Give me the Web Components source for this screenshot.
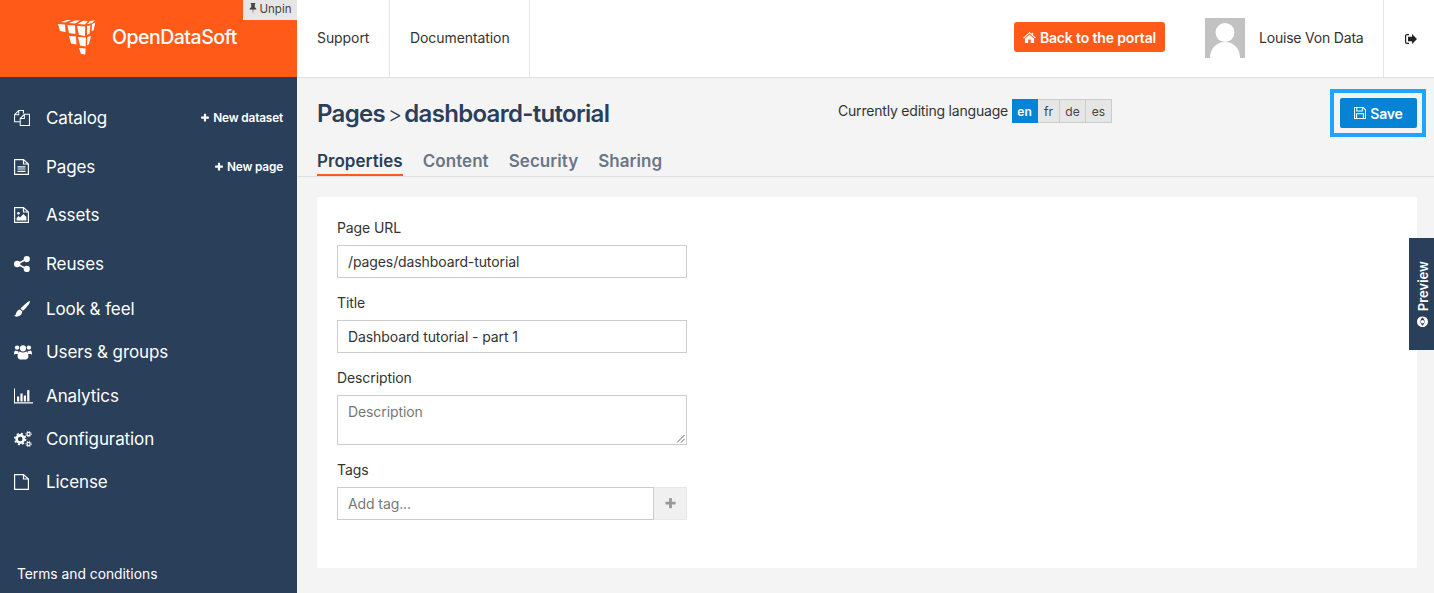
<!DOCTYPE html>
<html lang="en">
<head>
<meta charset="utf-8">
<title>Pages - dashboard-tutorial</title>
<style>
  html, body { margin: 0; height: 100%; }
  body { font-family: Inter, "Liberation Sans", sans-serif; color: #333; overflow: hidden; }
</style>
</head>
<body>
<app-shell>
  <side-bar slot="side">
    <nav-item h="48" icon="catalog" label="Catalog" action="New dataset"></nav-item>
    <nav-item h="49" icon="file-text" label="Pages" action="New page"></nav-item>
    <nav-item h="48" icon="file-image" label="Assets"></nav-item>
    <nav-item h="49" icon="share" label="Reuses"></nav-item>
    <nav-item h="42" icon="brush" label="Look &amp; feel"></nav-item>
    <nav-item h="44" icon="users" label="Users &amp; groups"></nav-item>
    <nav-item h="44" icon="chart" label="Analytics"></nav-item>
    <nav-item h="42" icon="cogs" label="Configuration"></nav-item>
    <nav-item h="44" icon="file" label="License"></nav-item>
  </side-bar>
  <top-bar slot="top"></top-bar>
  <page-head slot="main"></page-head>
  <form-card slot="main">
    <form-field label="Page URL" value="/pages/dashboard-tutorial"></form-field>
    <form-field label="Title" value="Dashboard tutorial - part 1"></form-field>
    <form-field label="Description" placeholder="Description" kind="area"></form-field>
    <form-field label="Tags" placeholder="Add tag..." kind="tag"></form-field>
  </form-card>
  <preview-tab slot="main"></preview-tab>
</app-shell>

<script>
// icons, drawn on the sizes they have in the reference
const ICONS = {
  plus: '<svg viewBox="0 0 1792 1792" fill="currentColor"><path d="M1600 736v192q0 40-28 68t-68 28h-416v416q0 40-28 68t-68 28h-192q-40 0-68-28t-28-68v-416h-416q-40 0-68-28t-28-68v-192q0-40 28-68t68-28h416v-416q0-40 28-68t68-28h192q40 0 68 28t28 68v416h416q40 0 68 28t28 68z"/></svg>',
  catalog: '<svg viewBox="0 0 17 17" fill="none" stroke="currentColor" stroke-width="1.1"><path d="M10 3.8 V.6 H5 L.6 5 V12.4 H6.2 M5 .6 V5 H.6"/><path d="M11 4.6 H16.4 V16.4 H6.6 V9 Z M11 4.6 V9 H6.6"/></svg>',
  'file-text': '<svg viewBox="0 0 15 16" fill="none" stroke="currentColor" stroke-width="1.2"><path d="M.6.6 H9.5 L14.4 5 V15.4 H.6 Z M9.5.6 V5 H14.4"/><path d="M3.5 7.8 H11.5 M3.5 10 H11.5 M3.5 12.3 H11.5"/></svg>',
  'file-image': '<svg viewBox="0 0 15 16" fill="none" stroke="currentColor" stroke-width="1.2"><path d="M.6.6 H9.5 L14.4 5 V15.4 H.6 Z M9.5.6 V5 H14.4"/><circle cx="4.4" cy="6.2" r="1.3" fill="currentColor" stroke="none"/><path d="M2.6 13.4 V11 L4.6 9 L6 10.4 L9.4 7 L12.4 10 V13.4 Z" fill="currentColor" stroke="none"/></svg>',
  share: '<svg viewBox="0 0 15 15" fill="currentColor"><circle cx="3" cy="7.5" r="3"/><circle cx="12" cy="2.9" r="2.9"/><circle cx="12" cy="12.1" r="2.9"/><path d="M3 7.5 L12 2.9 M3 7.5 L12 12.1" stroke="currentColor" stroke-width="1.6"/></svg>',
  brush: '<svg viewBox="0 0 17 17" fill="currentColor"><path d="M16.7.2 C17.2.6 16.6 2.4 15 4.6 C13.4 6.8 11 9.4 9.5 10.4 L6.9 8.2 C8.4 6.2 10.8 3.9 13 2.3 C14.8 1 16.2-.2 16.7.2 Z"/><path d="M6.2 8.9 L8.8 11.2 C8.6 14 6.4 16.4 3.4 16.6 C2 16.7.6 16.3 0 15.8 C1.3 15.4 1.9 14.8 2.2 13.4 C2.6 11.2 4 9.2 6.2 8.9 Z"/></svg>',
  users: '<svg viewBox="0 0 18 16" fill="currentColor"><circle cx="3.1" cy="3.6" r="2.2"/><circle cx="14.9" cy="3.6" r="2.2"/><circle cx="9" cy="4.3" r="3.1"/><path d="M0 10.4 C0 7.6.8 6.6 1.8 6.6 C2.6 7.3 3.6 7.5 4.6 7.2 C4.2 8 4 9 4.1 10 H1.2 C.8 10.6.2 10.6 0 10.4 Z"/><path d="M18 10.4 C18 7.6 17.2 6.6 16.2 6.6 C15.4 7.3 14.4 7.5 13.4 7.2 C13.8 8 14 9 13.9 10 H16.8 C17.2 10.6 17.8 10.6 18 10.4 Z"/><path d="M5.7 7.6 C7.5 8.9 10.5 8.9 12.3 7.6 C13.6 8 14.4 9.6 14.4 12.6 C14.4 14.4 13.4 15.4 12 15.4 H6 C4.6 15.4 3.6 14.4 3.6 12.6 C3.6 9.6 4.4 8 5.7 7.6 Z"/></svg>',
  chart: '<svg viewBox="0 0 19 15" fill="currentColor"><path d="M0 0 H1 V13.8 H19 V15 H0 Z"/><rect x="3" y="8" width="2.2" height="5"/><rect x="6.4" y="5" width="2.2" height="8"/><rect x="9.8" y="7" width="2.2" height="6"/><rect x="13.2" y="1.6" width="2.2" height="11.4"/></svg>',
  cogs: '<svg viewBox="0 0 18 16" fill="none" stroke="currentColor"><circle cx="6.2" cy="8" r="3.6" stroke-width="2.6"/><circle cx="6.2" cy="8" r="5.4" stroke-width="1.6" stroke-dasharray="2.1 2.14"/><circle cx="14.6" cy="3" r="1.6" stroke-width="1.2"/><circle cx="14.6" cy="3" r="2.7" stroke-width=".9" stroke-dasharray="1.1 1.02"/><circle cx="14.6" cy="13" r="1.6" stroke-width="1.2"/><circle cx="14.6" cy="13" r="2.7" stroke-width=".9" stroke-dasharray="1.1 1.02"/></svg>',
  file: '<svg viewBox="0 0 15 16" fill="none" stroke="currentColor" stroke-width="1.2"><path d="M.6.6 H9.5 L14.4 5 V15.4 H.6 Z M9.5.6 V5 H14.4"/></svg>',
  pin: '<svg viewBox="0 0 9 13" fill="currentColor"><path d="M1.6 0 H7.4 V1 H6.6 V5 C7.8 5.6 8.6 6.6 8.6 7.8 H5 L4.5 13 L4 7.8 H.4 C.4 6.6 1.2 5.6 2.4 5 V1 H1.6 Z"/></svg>',
  home: '<svg viewBox="0 0 14 12" fill="currentColor"><path d="M7 0 L9.3 2 V.8 H11 V3.5 L14 6.2 L13.2 7 L7 1.7 L.8 7 L0 6.2 Z"/><path d="M7 2.9 L12 7.1 V12 H8.4 V8.3 H5.6 V12 H2 V7.1 Z"/></svg>',
  signout: '<svg viewBox="0 0 12 10" fill="currentColor"><path d="M4 0 H2 C.8 0 0 .8 0 2 V8 C0 9.2.8 10 2 10 H4 V8.8 H2.2 C1.6 8.8 1.2 8.4 1.2 7.8 V2.2 C1.2 1.6 1.6 1.2 2.2 1.2 H4 Z"/><path d="M7 0 L12 5 L7 10 V7.2 H3 V2.8 H7 Z"/></svg>',
  save: '<svg viewBox="0 0 13 13" fill="none" stroke="currentColor" stroke-width="1.1"><path d="M.6.6 H10 L12.4 3 V12.4 H.6 Z"/><path d="M3 .8 V4.4 H9 V.8 M2.8 12.2 V7.4 H10.2 V12.2"/></svg>',
  eye: '<svg viewBox="0 0 12 12" fill="currentColor"><circle cx="6" cy="6" r="6"/><path d="M1.6 6 C3.4 3 8.6 3 10.4 6 C8.6 9 3.4 9 1.6 6 Z" fill="#2a3f5a"/><circle cx="6" cy="6" r="1.9"/></svg>'
};

function define(name, css, render) {
  customElements.define(name, class extends HTMLElement {
    connectedCallback() {
      if (this.shadowRoot) return;
      this.attachShadow({ mode: 'open' });
      this.shadowRoot.innerHTML = `<style>${css}</style>${render(this)}`;
    }
  });
}

define('app-shell', `
  :host { display: grid; grid-template-columns: 297px 1fr; grid-template-rows: 78px 1fr; height: 593px; background: #f4f4f4; overflow: hidden; position: relative; }
  .side { grid-row: 1 / 3; display: flex; min-height: 0; }
  .main { position: relative; min-width: 0; }
`, () => `
  <div class="side"><slot name="side"></slot></div>
  <slot name="top"></slot>
  <div class="main"><slot name="main"></slot></div>
`);

define('side-bar', `
  :host { display: flex; flex-direction: column; width: 297px; background: #2a3f5a; color: #fff; }
  .brand { position: relative; height: 77px; background: #ff5a17; display: flex; align-items: flex-start; flex: none; }
  .logo { width: 44px; height: 38px; margin: 18px 0 0 56px; flex: none; }
  .name { font-size: 19.5px; font-weight: 500; letter-spacing: -.5px; margin: 25px 0 0 12px; line-height: 24px; color: #fff; }
  .unpin { position: absolute; top: 0; right: 0; width: 54px; height: 20px; padding-bottom: 3px; background: #e6e6e6; color: #444; font-size: 11.5px; display: flex; align-items: center; justify-content: center; gap: 3px; box-sizing: border-box; }
  .unpin svg { width: 8px; height: 11px; }
  nav { padding-top: 17px; display: flex; flex-direction: column; }
  .terms { margin-top: auto; padding: 0 0 10px 17px; font-size: 13.8px; line-height: 18px; }
`, () => `
  <div class="brand">
    <svg class="logo" viewBox="56 18 44 38" fill="#fff">
      <path d="M61 22 L67 20 L71 20 L65 22.6 Z M69 23 L75 20.4 L80 20.6 L75 23.6 Z M77.5 24 L83 20.8 L88 21 L85 24.4 Z M87 24.2 L90 21 L95 20.2 L92 23 Z"/>
      <path d="M58 24 L65 24.6 L65.6 32 L60 31 Z M67.4 25 L75 25.6 L75.4 34 L69 33 Z M77 26 L85.2 26.4 L85 36 L79 35 Z M87 26 L90.4 25.4 L89.6 33.6 L87 35 Z M92 24 L95.4 22.6 L93.6 30 L91.6 31.6 Z"/>
      <path d="M69 36 L76 36.6 L76.4 44.4 L71 43.6 Z M78 37 L86 37.4 L85.6 46.4 L80 45.6 Z M87.4 37 L91 36 L89 44 L87 45.6 Z"/>
      <path d="M79 48 L85.6 48.4 L85.2 54.6 L81 54 Z"/>
    </svg>
    <span class="name">OpenDataSoft</span>
    <div class="unpin">${ICONS.pin}<span>Unpin</span></div>
  </div>
  <nav><slot></slot></nav>
  <div class="terms">Terms and conditions</div>
`);

define('nav-item', `
  :host { display: flex; align-items: center; padding: 0 14px; font-size: 17px; color: #fff; }
  .icon { width: 19px; height: 16px; display: flex; align-items: center; flex: none; }
  .icon svg { height: 100%; width: auto; display: block; }
  .label { margin-left: 13px; letter-spacing: -.1px; }
  .action { margin-left: auto; font-size: 11.8px; font-weight: 600; letter-spacing: -.15px; display: flex; align-items: center; gap: 3px; }
  .action svg { width: 10px; height: 10px; }
`, el => `
  <style>:host { height: ${el.getAttribute('h')}px; }</style>
  <span class="icon">${ICONS[el.getAttribute('icon')]}</span>
  <span class="label">${el.getAttribute('label').replace('&', '&amp;')}</span>
  ${el.hasAttribute('action') ? `<span class="action">${ICONS.plus}<span>${el.getAttribute('action')}</span></span>` : ''}
`);

define('top-bar', `
  :host { display: flex; align-items: stretch; background: #fff; border-bottom: 1px solid #e0e0e0; box-sizing: border-box; height: 78px; font-size: 14px; color: #333; }
  .link { display: flex; align-items: center; padding: 0 0 2px 20px; box-sizing: border-box; border-right: 1px solid #e6e6e6; letter-spacing: -.08px; }
  .link.a { width: 93px; }
  .link.b { width: 140px; }
  .back { margin: 22px 0 0 auto; height: 30px; width: 151px; box-sizing: border-box; border-radius: 3px; background: #ff5a17; color: #fff; font-weight: 600; font-size: 14px; letter-spacing: -.15px; display: flex; align-items: center; justify-content: center; gap: 4px; }
  .back svg { width: 13px; height: 11px; }
  .user { display: flex; align-items: center; margin-left: 40px; width: 179px; box-sizing: border-box; border-right: 1px solid #e6e6e6; letter-spacing: -.2px; padding-bottom: 2px; }
  .avatar { width: 40px; height: 40px; margin: 0 14px 0 0; flex: none; display: block; }
  .out { width: 50px; flex: none; display: flex; align-items: center; justify-content: center; padding-left: 3px; box-sizing: border-box; }
  .out svg { width: 12px; height: 10px; color: #222; }
`, () => `
  <div class="link a">Support</div>
  <div class="link b">Documentation</div>
  <div class="back">${ICONS.home}<span>Back to the portal</span></div>
  <div class="user">
    <svg class="avatar" viewBox="0 0 40 40"><rect width="40" height="40" fill="#c2c2c2"/><circle cx="20" cy="14.5" r="9.5" fill="#fff"/><path d="M5 40 C5 30 12 24 20 24 C28 24 35 30 35 40 Z" fill="#fff"/></svg>
    <span>Louise Von Data</span>
  </div>
  <div class="out">${ICONS.signout}</div>
`);

define('page-head', `
  :host { display: block; height: 99px; border-bottom: 1px solid #e0e0e0; box-sizing: border-box; padding: 11px 8px 0 20px; }
  .row { display: grid; grid-template-columns: 521px auto 1fr auto; align-items: start; height: 58px; }
  h1 { margin: 10px 0 0; font-size: 24px; line-height: 30px; font-weight: 600; letter-spacing: -.7px; color: #2a3f5a; white-space: nowrap; word-spacing: -2.5px; }
  h1 i { font-style: normal; font-weight: 300; font-size: 22px; }
  .lang { display: flex; align-items: center; margin-top: 10px; font-size: 14px; letter-spacing: -.2px; }
  .lang span { margin-right: 4px; position: relative; top: -1px; }
  .save { grid-column: 4; }
  .tabs { display: flex; gap: 20px; margin-top: 1px; font-size: 17px; font-weight: 600; color: #6a7686; letter-spacing: .05px; }
  .tabs div { height: 28px; line-height: 26px; box-sizing: border-box; }
  .tabs .on { color: #2a3f5a; border-bottom: 2px solid #ff5a17; }
  .outline { border: 4px solid #1fa5ff; padding: 5px 5px 5px 6px; display: inline-flex; }
  .btn { width: 77px; height: 30px; background: #0584d6; color: #fff; border-radius: 2px; font-size: 14px; font-weight: 600; letter-spacing: -.2px; display: flex; align-items: center; justify-content: center; gap: 4px; }
  .btn svg { width: 12px; height: 12px; }
  lang-pick { display: inline-flex; }
`, () => `
  <div class="row">
    <h1>Pages <i>&gt;</i> dashboard-tutorial</h1>
    <div class="lang"><span>Currently editing language</span><lang-pick></lang-pick></div>
    <div class="save"><div class="outline"><div class="btn">${ICONS.save}<span>Save</span></div></div></div>
  </div>
  <div class="tabs"><div class="on">Properties</div><div>Content</div><div>Security</div><div>Sharing</div></div>
`);

define('lang-pick', `
  :host { display: inline-flex; font-size: 12px; letter-spacing: 0; }
  div { height: 24px; box-sizing: border-box; display: flex; align-items: center; justify-content: center; background: #e6e6e6; border: 1px solid #ccc; border-left: 0; color: #444; }
  .on { background: #0584d6; border-color: #0584d6; color: #fff; font-weight: 600; }
`, () => `
  <div class="on" style="width:26px">en</div><div style="width:22px">fr</div><div style="width:26px">de</div><div style="width:26px">es</div>
`);

define('form-card', `
  :host { display: block; margin: 20px 17px 0 20px; height: 371px; box-sizing: border-box; background: #fff; border-radius: 2px; padding: 21px 20px 0; }
`, () => `<slot></slot>`);

define('form-field', `
  :host { display: block; width: 350px; margin-bottom: 15px; font-size: 14px; letter-spacing: -.1px; }
  .lab { height: 20px; line-height: 20px; margin-bottom: 7px; color: #333; }
  .input { position: relative; height: 33px; box-sizing: border-box; border: 1px solid #ccc; background: #fff; padding: 0 10px; display: flex; align-items: center; color: #333; flex: 1; }
  .ph { color: #777; }
  .area { height: 50px; align-items: flex-start; padding-top: 7px; line-height: 17px; }
  .grip { position: absolute; right: 1px; bottom: 1px; width: 9px; height: 9px; }
  .tag { display: flex; }
  .add { width: 33px; height: 33px; flex: none; box-sizing: border-box; background: #f0f0f0; border: 1px solid #e8e8e8; border-left: 0; color: #999; display: flex; align-items: center; justify-content: center; }
  .add svg { width: 13px; height: 13px; }
`, el => {
  const kind = el.getAttribute('kind');
  const value = el.getAttribute('value');
  const text = value ? value : `<span class="ph">${el.getAttribute('placeholder')}</span>`;
  let box = `<div class="input">${text}</div>`;
  if (kind === 'area') {
    box = `<div class="input area">${text}<svg class="grip" viewBox="0 0 9 9" stroke="#666" fill="none"><path d="M1 8.5 L8.5 1 M5 8.5 L8.5 5"/></svg></div>`;
  }
  if (kind === 'tag') {
    box = `<div class="tag"><div class="input">${text}</div><div class="add">${ICONS.plus}</div></div>`;
  }
  return `<div class="lab">${el.getAttribute('label')}</div>${box}`;
});

define('preview-tab', `
  :host { position: absolute; right: 0; top: 160px; width: 25px; height: 112px; background: #2a3f5a; color: #fff; display: flex; align-items: center; justify-content: center; }
  .v { writing-mode: vertical-rl; transform: rotate(180deg); display: flex; align-items: center; gap: 5px; font-size: 13px; font-weight: 600; margin-left: 3px; }
  svg { width: 11px; height: 11px; transform: rotate(90deg); }
`, () => `<div class="v">${ICONS.eye}<span>Preview</span></div>`);
</script>
</body>
</html>
